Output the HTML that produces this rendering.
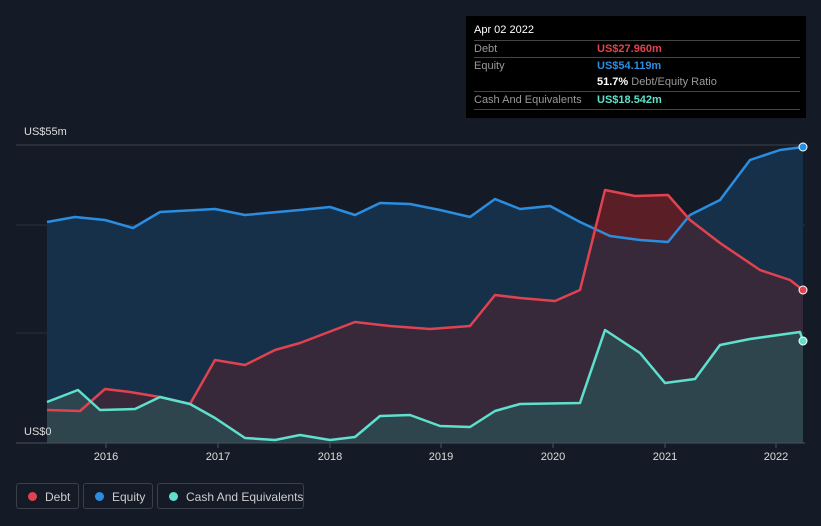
<!DOCTYPE html>
<html><head><style>
body{margin:0;background:#151b26;width:821px;height:526px;overflow:hidden;font-family:"Liberation Sans",sans-serif;position:relative}
.tt{position:absolute;left:466px;top:16px;width:340px;height:102px;background:#000;color:#fff;font-size:11px}
.tt .r{position:absolute;left:8px;width:326px;border-top:1px solid #444;height:17px;line-height:17px;color:#999}
.tt .v{position:absolute;left:123px;top:0;font-weight:bold}
.lg{position:absolute;top:483px;height:26px;border:1px solid #3a3f4a;border-radius:3px;color:#ccc;font-size:12px;line-height:26px;box-sizing:border-box;white-space:nowrap}
.lg i{position:absolute;left:11px;top:8px;width:9px;height:9px;border-radius:50%}
.lg span{position:absolute;left:28px}
</style></head><body>
<svg width="821" height="526" style="position:absolute;left:0;top:0">
<line x1="16" y1="145" x2="805" y2="145" stroke="#3a3f4a"/>
<line x1="16" y1="225" x2="805" y2="225" stroke="#25303c"/>
<line x1="16" y1="333" x2="805" y2="333" stroke="#25303c"/>
<polygon fill="#163049" points="47,222 75,217 105,220 133,228 160,212 215,209 245,215 300,210 330,207 355,215 380,203 410,204 440,210 470,217 495,199 520,209 550,206 580,222 610,236 640,240 668,242 690,215 720,200 750,160 780,150 803,147 803,443 47,443"/>
<polygon fill="#37293a" points="47,410 80,411 105,389 130,392 160,397 190,404 215,360 245,365 275,350 300,343 355,322 390,326 430,329 470,326 495,295 520,298 555,301 580,290 605,190 635,196 668,195 690,220 720,243 760,270 790,280 803,290 803,443 47,443"/>
<polygon fill="#5a1f26" points="590,240 605,190 635,196 668,195 686,218 668,242 640,240 610,236"/>
<polygon fill="#2f4850" opacity=".9" points="47,402 78,390 100,410 135,409 160,397 190,404 215,418 245,438 275,440 300,435 330,440 355,437 380,416 410,415 440,426 470,427 495,411 520,404 580,403 605,330 640,353 665,383 695,379 720,345 750,339 800,332 803,341 803,443 47,443"/>
<g fill="none" stroke-width="2.5" stroke-linejoin="round">
<polyline stroke="#2b8de0" points="47,222 75,217 105,220 133,228 160,212 215,209 245,215 300,210 330,207 355,215 380,203 410,204 440,210 470,217 495,199 520,209 550,206 580,222 610,236 640,240 668,242 690,215 720,200 750,160 780,150 803,147"/>
<polyline stroke="#e0434f" points="47,410 80,411 105,389 130,392 160,397 190,404 215,360 245,365 275,350 300,343 355,322 390,326 430,329 470,326 495,295 520,298 555,301 580,290 605,190 635,196 668,195 690,220 720,243 760,270 790,280 803,290"/>
<polyline stroke="#5ee0cc" points="47,402 78,390 100,410 135,409 160,397 190,404 215,418 245,438 275,440 300,435 330,440 355,437 380,416 410,415 440,426 470,427 495,411 520,404 580,403 605,330 640,353 665,383 695,379 720,345 750,339 800,332 803,341"/>
</g>
<circle cx="803" cy="147" r="4" fill="#2b8de0" stroke="#fff"/>
<circle cx="803" cy="290" r="4" fill="#e0434f" stroke="#fff"/>
<circle cx="803" cy="341" r="4" fill="#5ee0cc" stroke="#fff"/>
<line x1="16" y1="443" x2="805" y2="443" stroke="#4a505c"/>
<g stroke="#4a505c"><line x1="106" y1="443" x2="106" y2="448"/><line x1="218" y1="443" x2="218" y2="448"/><line x1="330" y1="443" x2="330" y2="448"/><line x1="441" y1="443" x2="441" y2="448"/><line x1="553" y1="443" x2="553" y2="448"/><line x1="665" y1="443" x2="665" y2="448"/><line x1="776" y1="443" x2="776" y2="448"/></g>
<g fill="#ddd" font-size="11" text-anchor="middle" font-family="Liberation Sans,sans-serif">
<text x="106" y="460">2016</text><text x="218" y="460">2017</text><text x="330" y="460">2018</text><text x="441" y="460">2019</text><text x="553" y="460">2020</text><text x="665" y="460">2021</text><text x="776" y="460">2022</text>
</g>
<text x="24" y="135" fill="#ddd" font-size="11">US$55m</text>
<text x="24" y="435" fill="#ddd" font-size="11">US$0</text>
</svg>
<div class="tt">
<div style="position:absolute;left:8px;top:8px">Apr 02 2022</div>
<div class="r" style="top:24px">Debt<span class="v" style="color:#e0434f">US$27.960m</span></div>
<div class="r" style="top:41px">Equity<span class="v" style="color:#2b8de0">US$54.119m</span></div>
<div class="r" style="top:58px;border-top:none"><span class="v" style="color:#fff">51.7% <span style="color:#999;font-weight:normal">Debt/Equity Ratio</span></span></div>
<div class="r" style="top:75px;border-bottom:1px solid #444">Cash And Equivalents<span class="v" style="color:#5ee0cc">US$18.542m</span></div>
</div>
<div class="lg" style="left:16px;width:63px"><i style="background:#e0434f"></i><span>Debt</span></div>
<div class="lg" style="left:83px;width:70px"><i style="background:#2b8de0"></i><span>Equity</span></div>
<div class="lg" style="left:157px;width:147px"><i style="background:#5ee0cc"></i><span>Cash And Equivalents</span></div>
</body></html>
